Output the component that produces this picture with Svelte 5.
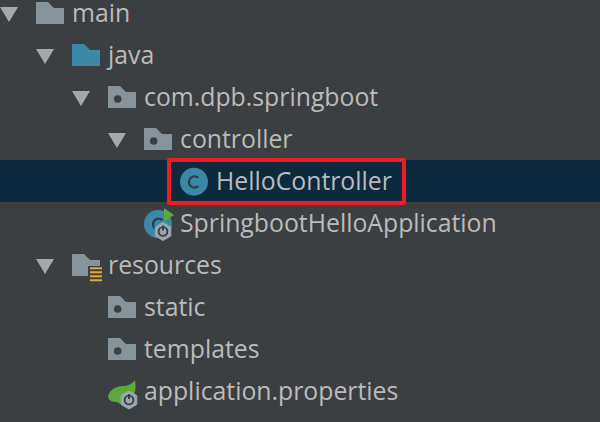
<script lang="ts">
	type Row = { name: string; depth: number; icon: string; open?: boolean; selected?: boolean };

	const rows: Row[] = [
		{ name: 'main', depth: 0, icon: 'folder', open: true },
		{ name: 'java', depth: 1, icon: 'source', open: true },
		{ name: 'com.dpb.springboot', depth: 2, icon: 'package', open: true },
		{ name: 'controller', depth: 3, icon: 'package', open: true },
		{ name: 'HelloController', depth: 4, icon: 'class', selected: true },
		{ name: 'SpringbootHelloApplication', depth: 3, icon: 'app' },
		{ name: 'resources', depth: 1, icon: 'resources', open: true },
		{ name: 'static', depth: 2, icon: 'package' },
		{ name: 'templates', depth: 2, icon: 'package' },
		{ name: 'application.properties', depth: 2, icon: 'props' }
	];

	const folderPath = 'M0 0H12L18 6H28V22H0Z';
</script>

{#snippet gear(x: number, y: number)}
	<g transform="translate({x} {y})">
		<path d="M0 -9L7.8 -4.5V4.5L0 9L-7.8 4.5V-4.5Z" fill="#9aa7b0" stroke="#9aa7b0" stroke-linejoin="round" />
		<circle r="4.4" fill="none" stroke="#3c3f41" stroke-width="1.9" />
		<path d="M0 -6V-1" stroke="#3c3f41" stroke-width="1.9" />
	</g>
{/snippet}

<div class="tree">
	{#each rows as row}
		<div class="row" class:selected={row.selected} style="padding-left: {row.depth * 36}px">
			<span class="arrow">
				{#if row.open}
					<svg width="18" height="15" viewBox="0 0 18 15"><path d="M0 0H18L9 15Z" fill="#a8a8a8" /></svg>
				{/if}
			</span>
			<span class="label" class:marked={row.selected}>
				<svg class="icon" width="30" height="32" viewBox="0 0 30 32">
					{#if row.icon === 'folder'}
						<path d={folderPath} transform="translate(0 5)" fill="#87939a" />
					{:else if row.icon === 'source'}
						<path d={folderPath} transform="translate(0 5)" fill="#3d88a6" />
					{:else if row.icon === 'package'}
						<path d={folderPath} transform="translate(0 5)" fill="#87939a" />
						<circle cx="9.7" cy="18" r="3.8" fill="#3c3f41" />
					{:else if row.icon === 'resources'}
						<path d={folderPath} transform="translate(0 5)" fill="#87939a" />
						<path d="M16 17H30V33H16Z" fill="#3c3f41" />
						<path d="M18 19.3H30M18 23.3H30M18 27.3H30M18 31.3H30" stroke="#e0a73a" stroke-width="2" />
					{:else if row.icon === 'class'}
						<circle cx="14" cy="16.7" r="14" fill="#3b87a8" />
						<path d="M18.5 13A5.6 5.6 0 1 0 18.5 21" fill="none" stroke="#2b3f4c" stroke-width="2.2" />
					{:else if row.icon === 'app'}
						<circle cx="14" cy="17" r="14" fill="#3b87a8" />
						<path d="M18.5 13.3A5.6 5.6 0 1 0 18.5 21.3" fill="none" stroke="#2b3f4c" stroke-width="2.2" />
						<path d="M20 1L30 8L20 15Z" fill="#5ea83f" />
						{@render gear(19, 24.5)}
					{:else if row.icon === 'props'}
						<path d="M0 22C1 15 8 11 15 11C20 11 24 9 27 5C28 12 28 20 22 25L14 30L9 27C5 27 1 26 0 22Z" fill="#5ea83f" />
						{@render gear(21, 25)}
					{/if}
				</svg>
				<span class="name">{row.name}</span>
			</span>
		</div>
	{/each}
</div>

<style>
	:global(body) {
		margin: 0;
		background: #3c3f41;
	}
	.tree {
		width: 600px;
		height: 422px;
		overflow: hidden;
		background: #3c3f41;
		font-family: 'Open Sans', 'Noto Sans', sans-serif;
		font-size: 24.8px;
		color: #bbbbbb;
	}
	.row {
		height: 42px;
		display: flex;
		align-items: center;
		box-sizing: border-box;
		white-space: nowrap;
	}
	/* the first row is scrolled partly out of view */
	.row:first-child {
		height: 26px;
		margin-bottom: 8px;
	}
	.row.selected {
		background: #0d293e;
	}
	.arrow {
		width: 36px;
		flex-shrink: 0;
		display: flex;
		align-items: center;
		margin-top: 3px;
	}
	.arrow svg {
		display: block;
	}
	.label {
		display: flex;
		align-items: center;
		gap: 6px;
		position: relative;
	}
	.icon {
		flex-shrink: 0;
		display: block;
		overflow: visible;
	}
	.name {
		line-height: 1;
		margin-top: -1px;
	}
	.marked::after {
		content: '';
		position: absolute;
		left: -13px;
		right: -14px;
		top: -7px;
		bottom: -8px;
		border: 4px solid #ee1c25;
		border-radius: 2px;
	}
</style>
